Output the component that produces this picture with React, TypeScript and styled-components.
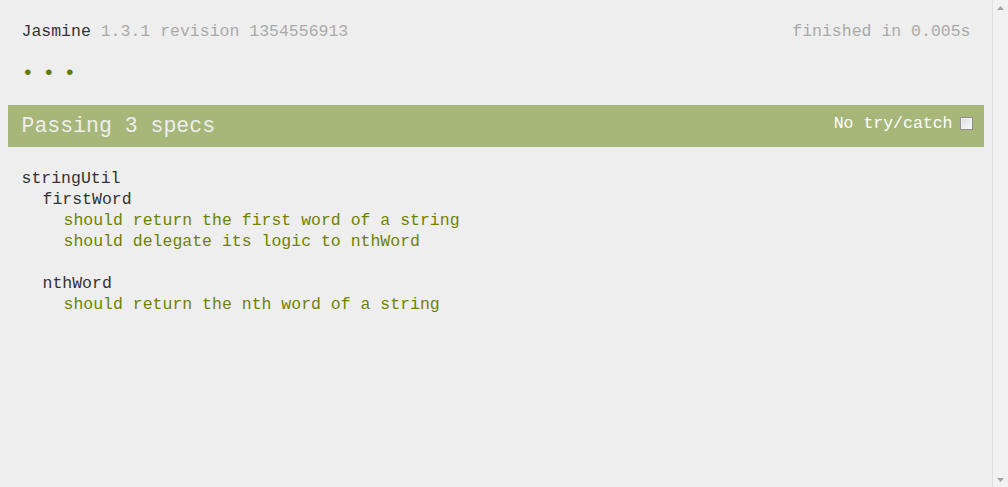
import React from 'react'
import styled, { createGlobalStyle } from 'styled-components'

interface Spec {
  description: string
}

interface Suite {
  description: string
  specs?: Spec[]
  suites?: Suite[]
}

const GlobalStyle = createGlobalStyle`
  html, body {
    height: 100%;
  }
  body {
    background-color: #eeeeee;
    margin: 0;
    padding: 0;
    overflow: hidden;
  }
  #root {
    height: 100%;
  }
`

const Viewport = styled.div`
  display: flex;
  height: 100%;
`

const Page = styled.div`
  flex: 1;
  min-width: 0;
  padding: 21px 8px 8px;
`

const Scrollbar = styled.div`
  width: 16px;
  flex: none;
  border-left: 1px solid #dedede;
  background-color: #f1f1f1;
  display: flex;
  flex-direction: column;
  justify-content: space-between;
  align-items: center;
  padding: 6px 0 5px;
  box-sizing: border-box;
`

const Arrow = styled.svg`
  width: 7px;
  height: 4px;
  display: block;
`

const Reporter = styled.div`
  font-family: "Liberation Mono", "DejaVu Sans Mono", monospace;
  font-size: 16.5px;
  line-height: 21px;
  color: #333333;
`

const Banner = styled.div`
  padding: 0 13.5px;
  display: flex;
  justify-content: space-between;
`

const Title = styled.span`
  color: #333333;
`

const Muted = styled.span`
  color: #aaaaaa;
`

const SymbolSummary = styled.ul`
  list-style: none;
  margin: 21px 0;
  padding: 0 13.5px;
  display: flex;
`

const Symbol = styled.li<{ $passed?: boolean }>`
  width: 21px;
  height: 21px;
  font-size: 21px;
  line-height: 21px;
  color: ${(p) => (p.$passed ? '#5e7d00' : '#b03911')};
`

const Alert = styled.div<{ $tone: string }>`
  display: flex;
  justify-content: space-between;
  align-items: flex-start;
  background-color: ${(p) => p.$tone};
  color: #eeeeee;
  padding: 0 7.5px 0 13.5px;
`

const BarText = styled.span`
  font-size: 21.5px;
  line-height: 42px;
`

const Exceptions = styled.label`
  display: flex;
  align-items: center;
  margin-top: 7.5px;
  color: #ffffff;
  line-height: 21px;
`

const Checkbox = styled.input`
  appearance: none;
  width: 13px;
  height: 13px;
  margin: 0 4px 0 7px;
  box-sizing: border-box;
  border: 1px solid #8f8f8f;
  box-shadow: inset 0 0 0 1px #f4f4f4;
  background: linear-gradient(135deg, #d6d6d6 0%, #f0f0f0 60%, #fbfbfb 100%);
`

const Summary = styled.div`
  margin-top: 21px;
  padding: 0 13.5px;
`

const SuiteBlock = styled.div<{ $nested?: boolean; $first?: boolean }>`
  margin-top: ${(p) => (p.$first ? '0' : '21px')};
  margin-left: ${(p) => (p.$nested ? '21px' : '0')};
`

const SuiteName = styled.div`
  color: #333333;
`

const SpecLine = styled.div`
  margin-left: 21px;
  color: #6f8200;
`

const results: Suite[] = [
  {
    description: 'stringUtil',
    suites: [
      {
        description: 'firstWord',
        specs: [
          { description: 'should return the first word of a string' },
          { description: 'should delegate its logic to nthWord' },
        ],
      },
      {
        description: 'nthWord',
        specs: [{ description: 'should return the nth word of a string' }],
      },
    ],
  },
]

const SuiteView = ({ suite, nested, first }: { suite: Suite; nested?: boolean; first?: boolean }) => (
  <SuiteBlock $nested={nested} $first={first}>
    <SuiteName>{suite.description}</SuiteName>
    {suite.specs?.map((s) => (
      <SpecLine key={s.description}>{s.description}</SpecLine>
    ))}
    {suite.suites?.map((child, i) => (
      <SuiteView key={child.description} suite={child} nested first={i === 0} />
    ))}
  </SuiteBlock>
)

const App = () => {
  const specCount = 3
  return (
    <>
      <GlobalStyle />
      <Viewport>
        <Page>
          <Reporter>
            <Banner>
              <span>
                <Title>Jasmine</Title> <Muted>1.3.1 revision 1354556913</Muted>
              </span>
              <Muted>finished in 0.005s</Muted>
            </Banner>
            <SymbolSummary>
              {Array.from({ length: specCount }).map((_, i) => (
                <Symbol key={i} $passed>
                  {'\u2022'}
                </Symbol>
              ))}
            </SymbolSummary>
            <Alert $tone="#a6b779">
              <BarText>Passing {specCount} specs</BarText>
              <Exceptions>
                No try/catch
                <Checkbox type="checkbox" />
              </Exceptions>
            </Alert>
            <Summary>
              {results.map((suite) => (
                <SuiteView key={suite.description} suite={suite} first />
              ))}
            </Summary>
          </Reporter>
        </Page>
        <Scrollbar>
          <Arrow viewBox="0 0 7 4">
            <path d="M3.5 0 L7 4 L0 4 Z" fill="#a3a3a3" />
          </Arrow>
          <Arrow viewBox="0 0 7 4">
            <path d="M0 0 L7 0 L3.5 4 Z" fill="#a3a3a3" />
          </Arrow>
        </Scrollbar>
      </Viewport>
    </>
  )
}

export default App
